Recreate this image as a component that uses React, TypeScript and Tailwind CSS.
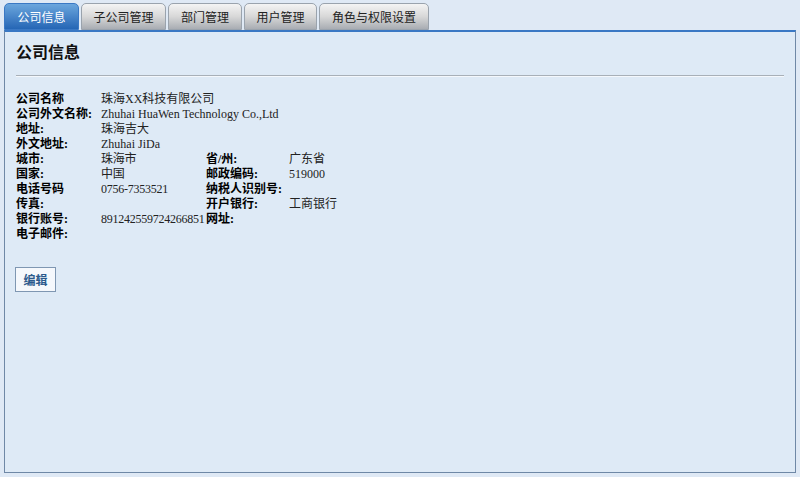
import React from "react";

const tabs = ["公司信息", "子公司管理", "部门管理", "用户管理", "角色与权限设置"];
const tabWidths = ["w-[75px]", "w-[85px]", "w-[74px]", "w-[73px]", "w-[110px]"];

type Row = { label: string; value?: string; label2?: string; value2?: string; wide?: boolean };

const rows: Row[] = [
  { label: "公司名称", value: "珠海XX科技有限公司", wide: true },
  { label: "公司外文名称:", value: "Zhuhai HuaWen Technology Co.,Ltd", wide: true },
  { label: "地址:", value: "珠海吉大", wide: true },
  { label: "外文地址:", value: "Zhuhai JiDa", wide: true },
  { label: "城市:", value: "珠海市", label2: "省/州:", value2: "广东省" },
  { label: "国家:", value: "中国", label2: "邮政编码:", value2: "519000" },
  { label: "电话号码", value: "0756-7353521", label2: "纳税人识别号:", value2: "" },
  { label: "传真:", value: "", label2: "开户银行:", value2: "工商银行" },
  { label: "银行账号:", value: "891242559724266851", label2: "网址:", value2: "" },
  { label: "电子邮件:", value: "", wide: true },
];

const font = "font-['Liberation_Serif','Noto_Sans_CJK_SC',serif]";

export default function App() {
  return (
    <div className="w-[800px] h-[477px] bg-[#dfe9f5] pt-[3px] overflow-hidden">
      <div className="flex items-end gap-[2px] pl-[4px] h-[27px]">
        {tabs.map((t, i) => (
          <div
            key={t}
            className={`${tabWidths[i]} h-[27px] rounded-t-[5px] flex items-center justify-center text-[12px] font-['Noto_Sans_CJK_SC',sans-serif] ${
              i === 0
                ? "bg-gradient-to-b from-[#6ba6dd] to-[#2566b5] text-white border border-[#3a78c4]"
                : "bg-gradient-to-b from-[#f4f4f4] via-[#d8d8d8] to-[#a9adb3] text-[#222] border border-[#9aa3ad]"
            }`}
          >
            {t}
          </div>
        ))}
      </div>
      <div className="mx-[4px] h-[443px] border-t-2 border-t-[#3a78c4] border-x border-b border-x-[#6f88a6] border-b-[#6f88a6] bg-[#deeaf6] px-[11px]">
        <h1 className="pt-[9px] text-[16px] leading-[20px] font-bold text-[#111] font-['Noto_Sans_CJK_SC',sans-serif]">
          公司信息
        </h1>
        <div className="mt-[14px] h-[2px] border-t border-[#a8b0b8] border-b border-b-[#f4f8fc]" />
        <div className={`mt-[15px] grid grid-cols-[85px_105px_83px_1fr] text-[12px] leading-[15px] text-[#222] ${font}`}>
          {rows.map((r) => (
            <React.Fragment key={r.label}>
              <div className="font-bold text-[#000] whitespace-nowrap">{r.label}</div>
              {r.wide ? (
                <div className="col-span-3 whitespace-nowrap">{r.value}</div>
              ) : (
                <>
                  <div className="whitespace-nowrap tracking-[-0.25px]">{r.value}</div>
                  <div className="font-bold text-[#000] whitespace-nowrap">{r.label2}</div>
                  <div className="whitespace-nowrap">{r.value2}</div>
                </>
              )}
            </React.Fragment>
          ))}
        </div>
        <button className="mt-[25px] -ml-[1px] w-[41px] h-[25px] border border-[#7f97b2] bg-[#f5f8fc] text-[12px] font-bold text-[#2b5a8c] font-['Noto_Sans_CJK_SC',sans-serif]">
          编辑
        </button>
      </div>
    </div>
  );
}
